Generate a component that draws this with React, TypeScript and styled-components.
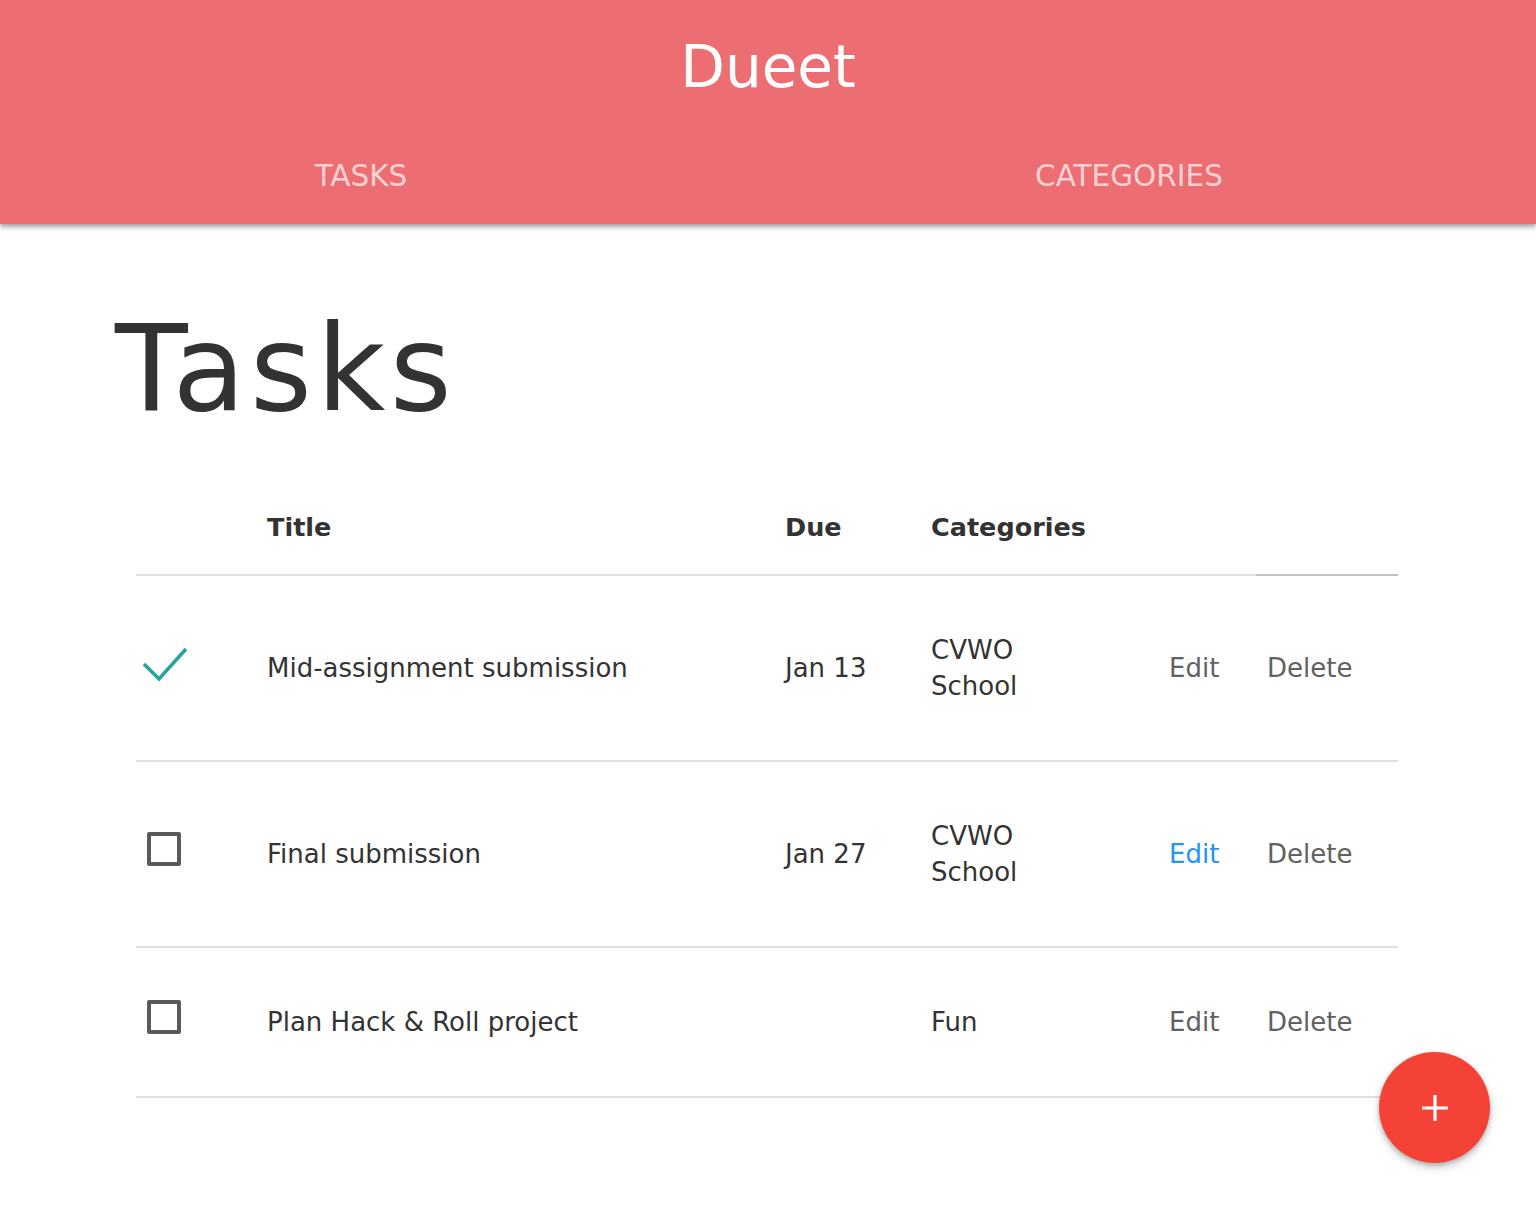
import React from "react";
import styled, { createGlobalStyle } from "styled-components";

const Global = createGlobalStyle`
  html, body { margin: 0; padding: 0; background: #ffffff; }
  body { font-family: "DejaVu Sans", Verdana, sans-serif; color: #333333; }
  * { box-sizing: border-box; }
`;

const Header = styled.header`
  background: #ec6e73;
  height: 224px;
  display: flex;
  flex-direction: column;
  box-shadow: 0 3px 6px rgba(0, 0, 0, 0.28), 0 2px 3px rgba(0, 0, 0, 0.16);
  position: relative;
  z-index: 1;
`;

const Brand = styled.div`
  height: 128px;
  display: flex;
  align-items: center;
  justify-content: center;
  color: #ffffff;
  font-size: 58px;
  padding-top: 6px;
`;

const Tabs = styled.nav`
  height: 96px;
  display: grid;
  grid-template-columns: 1fr 1fr;
`;

const Tab = styled.a`
  display: flex;
  align-items: center;
  justify-content: center;
  padding-right: 46px;
  color: rgba(255, 255, 255, 0.7);
  font-size: 29.5px;
  text-transform: uppercase;
  text-decoration: none;
  cursor: pointer;
`;

const Main = styled.main`
  padding: 79px 138px 0 115px;
`;

const PageTitle = styled.h1`
  margin: 0 0 44px 0;
  font-size: 119px;
  line-height: 132px;
  font-weight: 400;
  letter-spacing: 4.5px;
  color: #333333;
`;

const Table = styled.div`
  margin-left: 21px;
  width: 1262px;
  display: grid;
  grid-template-columns: 120px 518px 146px 238px 98px 142px;
`;

const HeadCell = styled.div<{ $strong?: boolean }>`
  padding: 30px 0 29px 11px;
  font-weight: 700;
  font-size: 25.5px;
  line-height: 36px;
  color: #333333;
  border-bottom: 2px solid ${(p) => (p.$strong ? "#c2c2c2" : "#e0e0e0")};
`;

const Cell = styled.div`
  padding: 56px 0 56px 11px;
  display: flex;
  align-items: center;
  font-size: 26px;
  line-height: 36px;
  color: #333333;
  border-bottom: 2px solid #e0e0e0;
`;

const Categories = styled.div`
  display: flex;
  flex-direction: column;
`;

const Box = styled.span`
  display: block;
  width: 34px;
  height: 34px;
  border: 4px solid #5a5a5a;
  border-radius: 2px;
  transform: translateY(-5px);
`;

const CheckWrap = styled.span`
  display: block;
  width: 46px;
  height: 38px;
  margin-left: -5px;
  transform: translateY(-5px);
`;

const Action = styled.a<{ $active?: boolean }>`
  color: ${(p) => (p.$active ? "#2196f3" : "#616161")};
  text-decoration: none;
  cursor: pointer;
`;

const Fab = styled.button`
  position: fixed;
  right: 46px;
  bottom: 47px;
  width: 111px;
  height: 111px;
  border-radius: 50%;
  border: none;
  background: #f44336;
  box-shadow: 0 4px 8px rgba(0, 0, 0, 0.22), 0 2px 4px rgba(0, 0, 0, 0.16);
  display: flex;
  align-items: center;
  justify-content: center;
  cursor: pointer;
  padding: 0;
`;

type Task = {
  title: string;
  due: string;
  cats: string[];
  done: boolean;
  editActive?: boolean;
};

const tasks: Task[] = [
  { title: "Mid-assignment submission", due: "Jan 13", cats: ["CVWO", "School"], done: true },
  { title: "Final submission", due: "Jan 27", cats: ["CVWO", "School"], done: false, editActive: true },
  { title: "Plan Hack & Roll project", due: "", cats: ["Fun"], done: false },
];

const Check = () => (
  <CheckWrap>
    <svg width="46" height="38" viewBox="0 0 46 38">
      <path d="M2 20 L17 35 L44 5" fill="none" stroke="#26a69a" strokeWidth="3.6" />
    </svg>
  </CheckWrap>
);

export default function App() {
  return (
    <>
      <Global />
      <Header>
        <Brand>Dueet</Brand>
        <Tabs>
          <Tab>Tasks</Tab>
          <Tab>Categories</Tab>
        </Tabs>
      </Header>
      <Main>
        <PageTitle>Tasks</PageTitle>
        <Table>
          <HeadCell />
          <HeadCell>Title</HeadCell>
          <HeadCell>Due</HeadCell>
          <HeadCell>Categories</HeadCell>
          <HeadCell />
          <HeadCell $strong />
          {tasks.map((t) => (
            <React.Fragment key={t.title}>
              <Cell>{t.done ? <Check /> : <Box />}</Cell>
              <Cell>{t.title}</Cell>
              <Cell>{t.due}</Cell>
              <Cell>
                <Categories>
                  {t.cats.map((c) => (
                    <span key={c}>{c}</span>
                  ))}
                </Categories>
              </Cell>
              <Cell>
                <Action $active={t.editActive}>Edit</Action>
              </Cell>
              <Cell>
                <Action>Delete</Action>
              </Cell>
            </React.Fragment>
          ))}
        </Table>
      </Main>
      <Fab aria-label="Add task">
        <svg width="30" height="30" viewBox="0 0 30 30">
          <path d="M15 2 V28 M2 15 H28" stroke="#ffffff" strokeWidth="3.2" />
        </svg>
      </Fab>
    </>
  );
}
